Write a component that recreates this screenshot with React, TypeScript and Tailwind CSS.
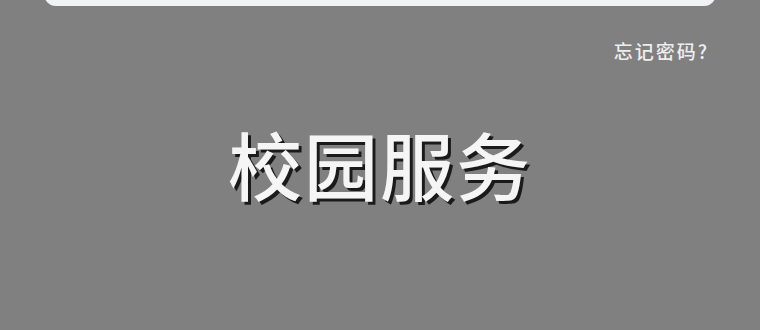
export default function App() {
  return (
    <div
      className="w-[760px] h-[330px] bg-[#808080] overflow-hidden flex flex-col"
      style={{ fontFamily: '"Noto Sans CJK SC", "Noto Sans", sans-serif' }}
    >
      <div className="mx-[44px] mt-[-44px] h-[50px] shrink-0 rounded-[12px] bg-[#f1f2f6]" />
      <div className="flex justify-end pr-[51px] mt-[32px]">
        <span className="text-[19px] leading-[26px] font-medium text-[#eeeeee] tracking-[2px]">忘记密码?</span>
      </div>
      <div className="flex justify-center mt-[54px]">
        <h1
          className="text-[74px] leading-[90px] font-medium text-[#f5f5f5] tracking-[2px]"
          style={{ textShadow: '3px 3px 0 #1a1a1a' }}
        >
          校园服务
        </h1>
      </div>
    </div>
  );
}
